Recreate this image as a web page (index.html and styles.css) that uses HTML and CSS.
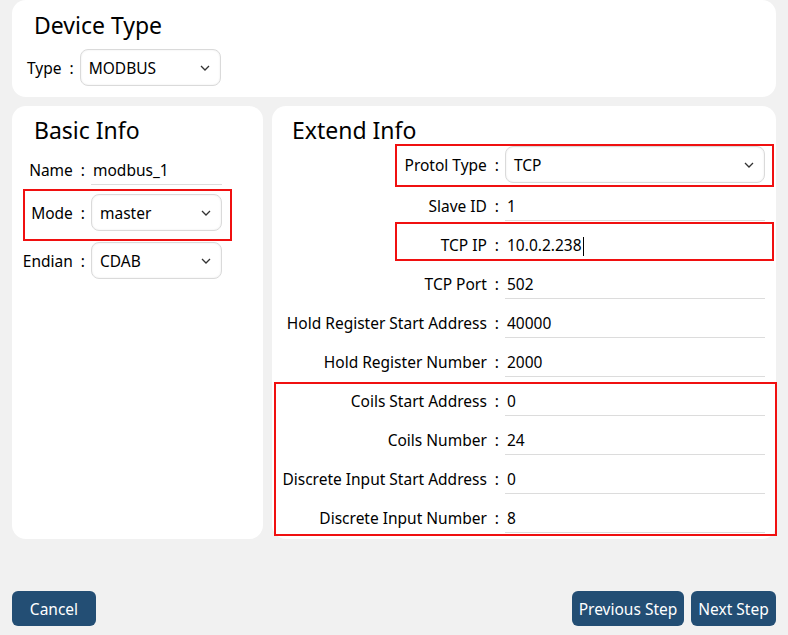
FILE: index.html
```html
<!DOCTYPE html>
<html lang="en">
<head>
    <meta charset="UTF-8">
    <title>Device Config</title>
    <link rel="stylesheet" href="styles.css">
</head>
<body>
    <div class="page">
        <div class="card top-card">
            <h2>Device Type</h2>
            <div class="row type-row">
                <span class="label">Type<span class="colon">:</span></span>
                <div class="select">MODBUS<svg class="chev" viewBox="0 0 10 6"><path d="M1 1l4 4 4-4"/></svg></div>
            </div>
        </div>

        <div class="columns">
            <div class="card basic">
                <h2>Basic Info</h2>
                <div class="row row-name">
                    <span class="label">Name<span class="colon">:</span></span>
                    <div class="input">modbus_1</div>
                </div>
                <div class="row row-mode">
                    <span class="label">Mode<span class="colon">:</span></span>
                    <div class="select">master<svg class="chev" viewBox="0 0 10 6"><path d="M1 1l4 4 4-4"/></svg></div>
                </div>
                <div class="row row-endian">
                    <span class="label">Endian<span class="colon">:</span></span>
                    <div class="select">CDAB<svg class="chev" viewBox="0 0 10 6"><path d="M1 1l4 4 4-4"/></svg></div>
                </div>
                <div class="mark mark-mode"></div>
            </div>

            <div class="card extend">
                <h2>Extend Info</h2>
                <div class="row first">
                    <span class="label">Protol Type<span class="colon">:</span></span>
                    <div class="select">TCP<svg class="chev" viewBox="0 0 10 6"><path d="M1 1l4 4 4-4"/></svg></div>
                </div>
                <div class="row">
                    <span class="label">Slave ID<span class="colon">:</span></span>
                    <div class="input">1</div>
                </div>
                <div class="row">
                    <span class="label">TCP IP<span class="colon">:</span></span>
                    <div class="input">10.0.2.238<span class="caret"></span></div>
                </div>
                <div class="row">
                    <span class="label">TCP Port<span class="colon">:</span></span>
                    <div class="input">502</div>
                </div>
                <div class="row">
                    <span class="label">Hold Register Start Address<span class="colon">:</span></span>
                    <div class="input">40000</div>
                </div>
                <div class="row">
                    <span class="label">Hold Register Number<span class="colon">:</span></span>
                    <div class="input">2000</div>
                </div>
                <div class="row">
                    <span class="label">Coils Start Address<span class="colon">:</span></span>
                    <div class="input">0</div>
                </div>
                <div class="row">
                    <span class="label">Coils Number<span class="colon">:</span></span>
                    <div class="input">24</div>
                </div>
                <div class="row">
                    <span class="label">Discrete Input Start Address<span class="colon">:</span></span>
                    <div class="input">0</div>
                </div>
                <div class="row">
                    <span class="label">Discrete Input Number<span class="colon">:</span></span>
                    <div class="input">8</div>
                </div>
                <div class="mark mark-protol"></div>
                <div class="mark mark-ip"></div>
                <div class="mark mark-coils"></div>
            </div>
        </div>

        <div class="footer">
            <button class="btn btn-cancel">Cancel</button>
            <div class="steps">
                <button class="btn btn-prev">Previous Step</button>
                <button class="btn btn-next">Next Step</button>
            </div>
        </div>
    </div>
</body>
</html>
```

FILE: styles.css
```css
body {
    margin: 0;
    background-color: #f1f1f1;
    font-family: "Noto Sans", "Open Sans", sans-serif;
    font-size: 15.5px;
    color: #000;
}
.page {
    width: 764px;
    padding: 0 12px;
}
.card {
    background-color: #fff;
    border-radius: 14px;
    position: relative;
}
h2 {
    margin: 0;
    font-size: 23px;
    font-weight: normal;
    line-height: 30px;
}
.top-card {
    height: 97px;
    padding: 10px 0 0 0;
    box-sizing: border-box;
}
.top-card h2 {
    padding-left: 22px;
}
.type-row {
    margin-top: 8px;
    padding-left: 15px;
}
.row {
    display: flex;
    align-items: center;
    height: 39px;
}
.label {
    white-space: nowrap;
}
.colon {
    margin: 0 6px 0 8px;
}
.select {
    display: flex;
    align-items: center;
    justify-content: space-between;
    height: 37px;
    box-sizing: border-box;
    border: 1px solid #dadada;
    border-radius: 8px;
    padding: 0 10px 0 8px;
    box-shadow: inset 0 0 2px #e6e6e6;
}
.chev {
    width: 10px;
    height: 6px;
    fill: none;
    stroke: #333;
    stroke-width: 1.3;
}
.type-row .select {
    width: 141px;
}
.columns {
    display: flex;
    gap: 9px;
    margin-top: 9px;
    height: 433px;
}
.basic {
    width: 251px;
    padding-top: 9px;
    box-sizing: border-box;
}
.basic h2 {
    padding-left: 22px;
}
.basic .row .label {
    width: 79px;
    text-align: right;
}
.basic .select, .basic .input {
    width: 131px;
}
.row-name {
    margin-top: 5px;
}
.row-mode {
    margin-top: 4px;
}
.row-endian {
    margin-top: 9px;
}
.input {
    height: 30px;
    line-height: 30px;
    box-sizing: border-box;
    border-bottom: 1px solid #dcdcdc;
    padding-left: 2px;
    position: relative;
}
.caret {
    display: inline-block;
    width: 1px;
    height: 19px;
    background-color: #000;
    vertical-align: middle;
    margin-left: 1px;
}
.extend {
    flex: 1;
    padding-top: 9px;
    box-sizing: border-box;
}
.extend h2 {
    padding-left: 20px;
}
.extend .label {
    width: 233px;
    text-align: right;
}
.extend .select, .extend .input {
    width: 260px;
}
.extend .row.first {
    margin-bottom: 2px;
}
.mark {
    position: absolute;
    border: 2px solid #f01010;
    box-sizing: border-box;
}
.mark-mode {
    left: 11px;
    top: 83px;
    width: 209px;
    height: 52px;
}
.mark-protol {
    left: 123px;
    top: 38px;
    width: 379px;
    height: 43px;
}
.mark-ip {
    left: 123px;
    top: 116px;
    width: 379px;
    height: 39px;
}
.mark-coils {
    left: 2px;
    top: 276px;
    width: 503px;
    height: 154px;
}
.footer {
    display: flex;
    justify-content: space-between;
    margin-top: 52px;
}
.steps {
    display: flex;
    gap: 7px;
}
.btn {
    height: 35px;
    border: none;
    border-radius: 6px;
    background-color: #234e74;
    color: #fff;
    font-family: "Noto Sans", "Open Sans", sans-serif;
    font-size: 15.5px;
    padding: 0;
}
.btn-cancel {
    width: 84px;
}
.btn-prev {
    width: 112px;
}
.btn-next {
    width: 85px;
}
```
